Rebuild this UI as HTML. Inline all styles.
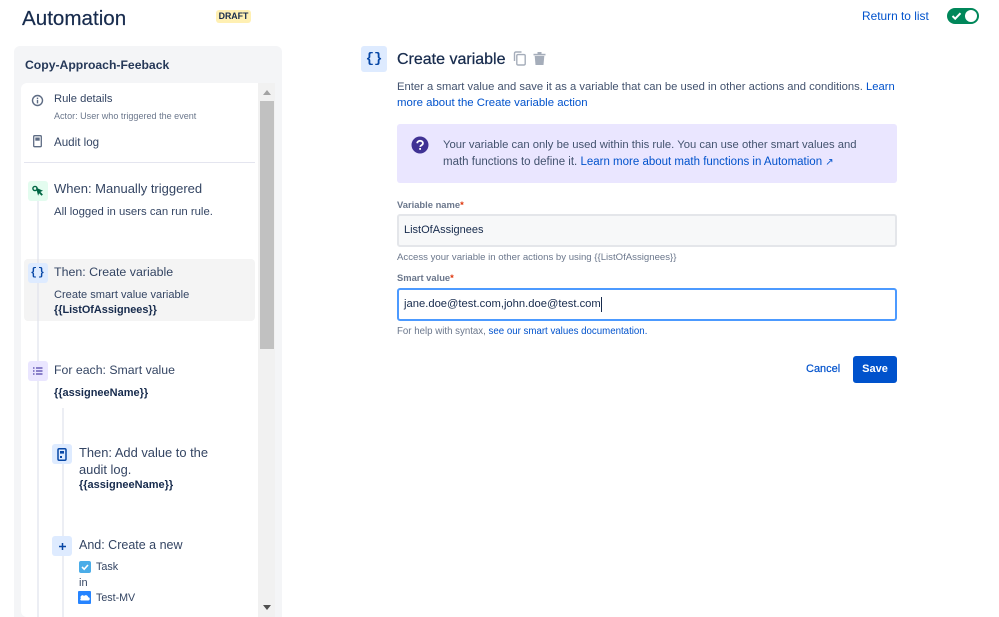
<!DOCTYPE html>
<html><head><meta charset="utf-8">
<style>
html,body{margin:0;padding:0;width:999px;height:617px;overflow:hidden;background:#fff}
body{font-family:"Liberation Sans",sans-serif;color:#42526e;position:relative}
.a{position:absolute;white-space:nowrap}
.b{position:absolute}
a{color:#0052cc;text-decoration:none}
.t{font-size:12.5px;line-height:16px;color:#344563}
.s{font-size:11px;line-height:14px;color:#344563}
.bd{font-weight:bold;color:#172b4d;font-size:10.9px;line-height:14px}
.ic{position:absolute;width:20px;height:20px;border-radius:3px;display:flex;align-items:center;justify-content:center}
</style></head><body>

<div class="a" style="left:22px;top:6px;font-size:20.6px;line-height:26px;color:#172b4d;-webkit-text-stroke:.2px #172b4d">Automation</div>
<div class="a" style="left:216px;top:10px;width:35px;height:13px;background:#fff0b3;border-radius:3px;font-size:8.8px;font-weight:bold;line-height:13px;text-align:center;color:#172b4d">DRAFT</div>
<a class="a" style="left:862px;top:9px;font-size:11.9px;line-height:15px;color:#0052cc">Return to list</a>
<div class="b" style="left:947px;top:8px;width:32px;height:16px;border-radius:8px;background:#00875a"></div>
<div class="b" style="left:965px;top:10px;width:12px;height:12px;border-radius:6px;background:#fff"></div>
<svg class="b" style="left:951px;top:11px" width="11" height="10" viewBox="0 0 11 10"><path d="M1.5 5l2.7 2.7L9.5 2.2" fill="none" stroke="#fff" stroke-width="2"/></svg>

<!-- Sidebar -->
<div class="b" style="left:14px;top:46px;width:268px;height:571px;background:#f4f5f7;border-radius:6px 6px 0 0"></div>
<div class="a" style="left:25px;top:57px;font-size:12.2px;line-height:16px;font-weight:bold;color:#253858">Copy-Approach-Feeback</div>
<div class="b" style="left:21px;top:83px;width:238px;height:534px;background:#fff;border-radius:6px 0 0 6px"></div>
<div class="b" style="left:258px;top:83px;width:17px;height:534px;background:#f1f1f1"></div>
<div class="b" style="left:260px;top:101px;width:14px;height:248px;background:#c1c1c1"></div>
<div class="b" style="left:263px;top:90px;width:0;height:0;border-left:4px solid transparent;border-right:4px solid transparent;border-bottom:5px solid #a3a3a3"></div>
<div class="b" style="left:263px;top:605px;width:0;height:0;border-left:4px solid transparent;border-right:4px solid transparent;border-top:5px solid #505050"></div>

<svg class="b" style="left:31px;top:94px" width="13" height="13" viewBox="0 0 13 13"><circle cx="6.5" cy="6.5" r="5" fill="none" stroke="#5e6c84" stroke-width="1.4"/><rect x="5.8" y="5.8" width="1.4" height="3.6" fill="#5e6c84"/><rect x="5.8" y="3.6" width="1.4" height="1.4" fill="#5e6c84"/></svg>
<div class="a s" style="left:54px;top:92px;font-size:11.2px">Rule details</div>
<div class="a" style="left:54px;top:110px;font-size:9.05px;line-height:13px;color:#6b778c">Actor: User who triggered the event</div>
<svg class="b" style="left:33px;top:135px" width="10" height="13" viewBox="0 0 10 13"><rect x=".7" y=".7" width="7.6" height="11" rx="1" fill="none" stroke="#5e6c84" stroke-width="1.3"/><rect x="2.3" y="2.5" width="4.4" height="3.2" fill="#5e6c84"/></svg>
<div class="a s" style="left:54px;top:136px;font-size:11.6px">Audit log</div>
<div class="b" style="left:24px;top:162px;width:231px;height:1px;background:#e4e5ef"></div>

<!-- Connectors -->
<div class="b" style="left:37px;top:200px;width:2px;height:417px;background:#eceef4"></div>
<div class="b" style="left:62px;top:408px;width:2px;height:209px;background:#eceef4"></div>

<!-- selected -->
<div class="b" style="left:24px;top:259px;width:231px;height:62px;background:#f4f4f4;border-radius:4px"></div>
<div class="b" style="left:37px;top:259px;width:2px;height:62px;background:#e8e9ef"></div>

<!-- When -->
<div class="ic" style="left:28px;top:181px;background:#e3fcef">
<svg width="14" height="14" viewBox="0 0 14 14"><circle cx="4" cy="4.5" r="2.1" fill="none" stroke="#006644" stroke-width="1.4"/><path d="M5 3.6l7 3.2-2.6 1.1 2.5 2.6-1.3 1.3-2.5-2.6-1 2.5z" fill="#006644"/></svg></div>
<div class="a t" style="left:54px;top:181px;font-size:13px">When: Manually triggered</div>
<div class="a s" style="left:54px;top:205px;font-size:11.35px">All logged in users can run rule.</div>

<!-- Then -->
<div class="ic" style="left:28px;top:263px;background:#deebff;font-size:11px;font-weight:bold;color:#0747a6;letter-spacing:1px;font-family:'Liberation Mono',monospace">{}</div>
<div class="a t" style="left:54px;top:264px;font-size:12.4px">Then: Create variable</div>
<div class="a s" style="left:54px;top:288px;font-size:11.07px">Create smart value variable</div>
<div class="a bd" style="left:54px;top:303px">{{ListOfAssignees}}</div>

<!-- For each -->
<div class="ic" style="left:28px;top:361px;background:#eae6ff">
<svg width="10" height="8" viewBox="0 0 10 8"><path d="M0 1h1.5M0 4h1.5M0 7h1.5M3 1h6.5M3 4h6.5M3 7h6.5" stroke="#5243aa" stroke-width="1.3" fill="none"/></svg></div>
<div class="a t" style="left:54px;top:362px;font-size:12.3px">For each: Smart value</div>
<div class="a bd" style="left:54px;top:386px;font-size:11px">{{assigneeName}}</div>

<!-- Then add -->
<div class="ic" style="left:52px;top:444px;background:#deebff">
<svg width="10" height="13" viewBox="0 0 10 13"><rect x="1" y=".8" width="8" height="11.4" rx="1.2" fill="none" stroke="#0747a6" stroke-width="1.5"/><rect x="3" y="3" width="4" height="2.6" fill="#0747a6"/><rect x="3" y="8" width="2" height="2" fill="#0747a6"/></svg></div>
<div class="a t" style="left:79px;top:444px;line-height:17px;font-size:12.9px">Then: Add value to the<br>audit log.</div>
<div class="a bd" style="left:79px;top:478px;font-size:11px">{{assigneeName}}</div>

<!-- And -->
<div class="ic" style="left:52px;top:536px;background:#deebff">
<svg width="9" height="9" viewBox="0 0 9 9"><path d="M4.5 1v7M1 4.5h7" stroke="#0747a6" stroke-width="1.5" fill="none"/></svg></div>
<div class="a t" style="left:79px;top:537px;font-size:12.5px">And: Create a new</div>
<div class="b" style="left:79px;top:561px;width:12px;height:12px;background:#4bade8;border-radius:2px"></div>
<svg class="b" style="left:79px;top:561px" width="12" height="12" viewBox="0 0 12 12"><path d="M3 6l2.2 2.2L9 4" fill="none" stroke="#fff" stroke-width="1.6"/></svg>
<div class="a s" style="left:96px;top:560px;font-size:10.8px">Task</div>
<div class="a s" style="left:79px;top:576px">in</div>
<div class="b" style="left:78px;top:591px;width:13px;height:13px;background:#2684ff;border-radius:1px"></div>
<svg class="b" style="left:78px;top:591px" width="13" height="13" viewBox="0 0 13 13"><path d="M3 9.5h7a1.6 1.6 0 0 0 .2-3.2A2.4 2.4 0 0 0 6 5a1.8 1.8 0 0 0-3 2.4 1.1 1.1 0 0 0 0 2.1z" fill="#fff"/></svg>
<div class="a s" style="left:96px;top:591px;font-size:10.7px">Test-MV</div>

<!-- Right header -->
<div class="ic" style="left:361px;top:46px;width:26px;height:26px;background:#deebff;font-size:14px;font-weight:bold;color:#0747a6;font-family:'Liberation Mono',monospace;letter-spacing:0">{}</div>
<div class="a" style="left:397px;top:50px;font-size:16px;line-height:20px;color:#172b4d;-webkit-text-stroke:.25px #172b4d">Create variable</div>
<svg class="b" style="left:513px;top:51px" width="14" height="15" viewBox="0 0 14 15"><rect x="3.8" y="3.6" width="8.4" height="10.4" rx="1.2" fill="#fff" stroke="#a5adba" stroke-width="1.4"/><path d="M1.5 10V2.4Q1.5 1 3 1h5.5" fill="none" stroke="#a5adba" stroke-width="1.4"/></svg>
<svg class="b" style="left:532px;top:51px" width="15" height="15" viewBox="0 0 15 15"><path d="M1.5 2.8h12v1.6h-12z" fill="#a5adba"/><path d="M5.5 1h4v2h-4z" fill="#a5adba"/><path d="M2.7 5h9.6l-.8 9H3.5z" fill="#a5adba"/></svg>

<div class="a" style="left:397px;top:79px;font-size:11.24px;line-height:17px;color:#42526e">Enter a smart value and save it as a variable that can be used in other actions and conditions. <a href="#">Learn</a></div>
<div class="a" style="left:397px;top:95px;font-size:11.4px;line-height:17px"><a href="#">more about the Create variable action</a></div>

<div class="b" style="left:397px;top:124px;width:500px;height:59px;background:#eae6ff;border-radius:3px"></div>
<svg class="b" style="left:411px;top:136px" width="18" height="18" viewBox="0 0 18 18"><circle cx="9" cy="9" r="8.5" fill="#403294"/><path d="M6.2 7.2A2.8 2.8 0 0 1 9 4.8c1.7 0 2.9 1 2.9 2.4 0 1.2-.8 1.7-1.6 2.2-.7.4-1 .7-1 1.5" fill="none" stroke="#fff" stroke-width="1.8"/><rect x="8.2" y="12" width="1.8" height="1.8" fill="#fff"/></svg>
<div class="a" style="left:443px;top:137px;font-size:11.28px;line-height:17px;color:#42526e">Your variable can only be used within this rule. You can use other smart values and</div>
<div class="a" style="left:443px;top:154px;font-size:11.5px;line-height:17px;color:#42526e">math functions to define it. <a href="#">Learn more about math functions in Automation <span style="font-size:10px">↗</span></a></div>

<div class="a" style="left:397px;top:198px;font-size:9.4px;line-height:13px;font-weight:bold;color:#6b778c">Variable name<span style="color:#de350b">*</span></div>
<div class="b" style="left:397px;top:214px;width:500px;height:33px;box-sizing:border-box;background:#f7f8f9;border:2px solid #e4e6ea;border-radius:3px"></div>
<div class="a" style="left:404px;top:223px;font-size:11px;line-height:15px;color:#172b4d">ListOfAssignees</div>
<div class="a" style="left:397px;top:251px;font-size:9.6px;line-height:14px;color:#6b778c">Access your variable in other actions by using {{ListOfAssignees}}</div>

<div class="a" style="left:397px;top:271px;font-size:9.4px;line-height:13px;font-weight:bold;color:#6b778c">Smart value<span style="color:#de350b">*</span></div>
<div class="b" style="left:397px;top:288px;width:500px;height:33px;box-sizing:border-box;background:#fff;border:2px solid #4c9aff;border-radius:3px"></div>
<div class="a" style="left:404px;top:297px;font-size:11.23px;line-height:15px;color:#172b4d">jane.doe@test.com,john.doe@test.com</div>
<div class="b" style="left:601px;top:297px;width:1px;height:15px;background:#172b4d"></div>
<div class="a" style="left:397px;top:325px;font-size:9.7px;line-height:14px;color:#6b778c">For help with syntax, <a href="#">see our smart values documentation.</a></div>

<a class="a" style="left:806px;top:362px;font-size:11px;line-height:15px;color:#0052cc;-webkit-text-stroke:.2px #0052cc">Cancel</a>
<div class="b" style="left:853px;top:356px;width:44px;height:27px;background:#0052cc;border-radius:3px;color:#fff;font-size:11px;font-weight:bold;line-height:27px;text-align:center">Save</div>

</body></html>
